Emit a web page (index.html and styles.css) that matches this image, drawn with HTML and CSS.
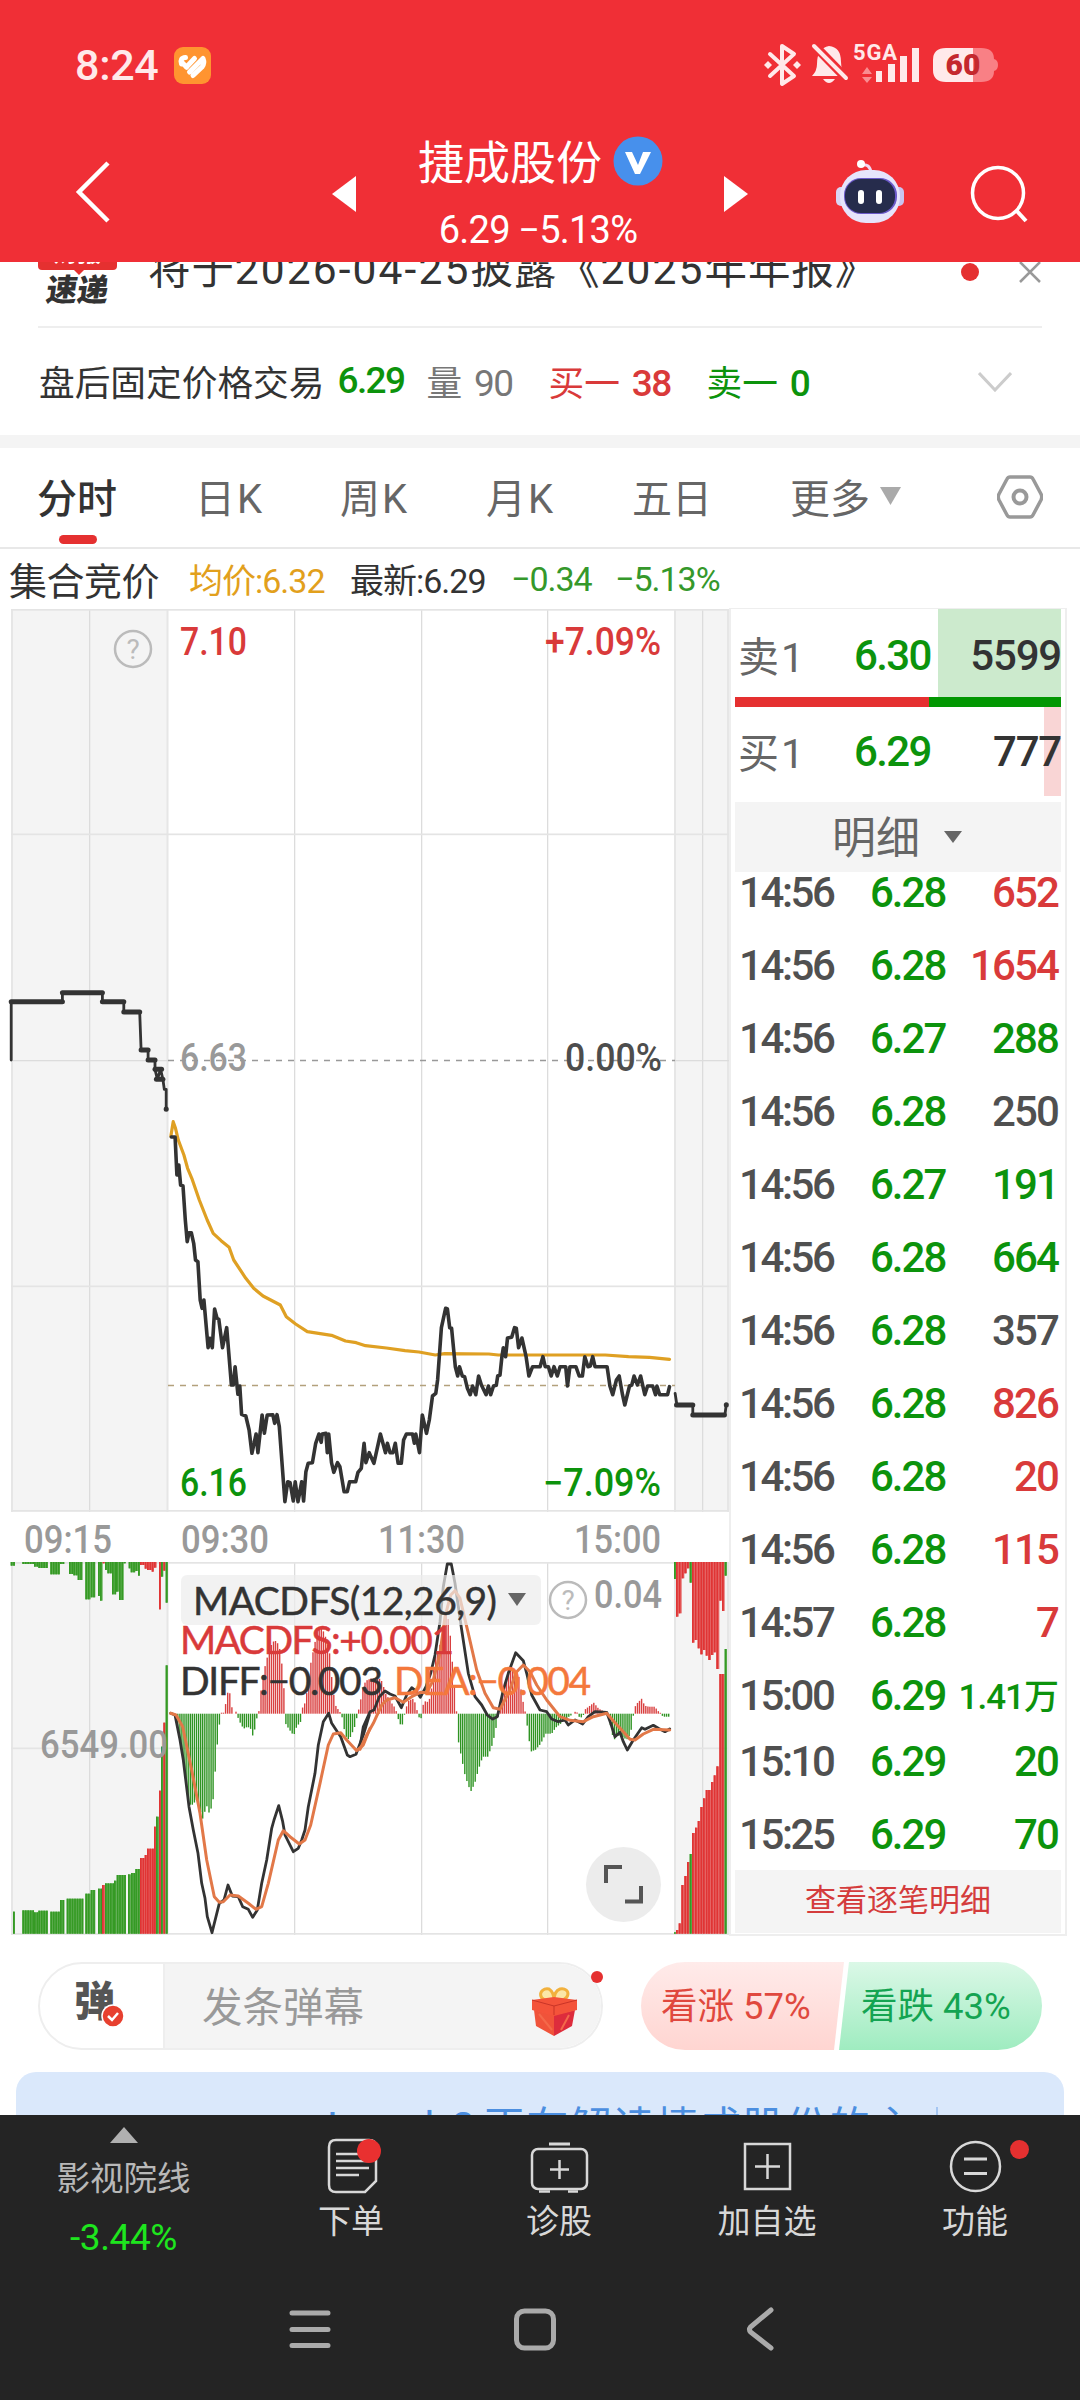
FILE: index.html
```html
<!DOCTYPE html>
<html lang="zh-CN">
<head>
    <meta charset="UTF-8">
    <meta name="viewport" content="width=device-width, initial-scale=1.0">
    <title>捷成股份</title>
    <link rel="stylesheet" href="styles.css">
</head>
<body>
    <div class="header">
        <div class="status-bar">
            <span class="clock">8:24</span>
            <svg class="app-icon" width="37" height="37" viewBox="0 0 37 37">
                <rect width="37" height="37" rx="9" fill="#ff9430"/>
                <path d="M7.500 17q-2-6 4-6.500M12.500 20l8-8.500M15.500 25L29 11.500q2 5-1 8.500l-9 8.500" fill="none" stroke="#fff" stroke-width="5" stroke-linecap="round" stroke-linejoin="round"/>
                <path d="M7.500 15l5 5" stroke="#fff" stroke-width="5" stroke-linecap="round"/>
            </svg>
            <svg class="status-icons" width="240" height="50" viewBox="760 40 240 50">
                <path d="M770 54 L794 76 L782 84 V46 L794 54 L770 76" fill="none" stroke="#ffe9ea" stroke-width="4" stroke-linejoin="round" stroke-linecap="round"/>
                <path d="M764 65l4-4 4 4-4 4zM793 65l4-4 4 4-4 4z" fill="#ffe9ea"/>
                <path d="M812 76 q5-5 5-12 q0-16 12-18 q12 1 12 16 q0 8 5 14z" fill="#ffe9ea"/>
                <path d="M823 79h12q-6 8-12 0z" fill="#ffe9ea"/>
                <path d="M812 43l35 36" stroke="#f02f36" stroke-width="9"/>
                <path d="M814 46l32 32" stroke="#ffe9ea" stroke-width="4" stroke-linecap="round"/>
                <text class="net" x="853" y="60" textLength="44">5GA</text>
                <path d="M862 74l5-7 5 7zM862 77h10l-5 6z" fill="#f98d91"/>
                <path d="M876 71h6v11h-6zM888 64h7v18h-7zM900 56h7v26h-7zM912 48h7v34h-7z" fill="#ffe9ea"/>
                <path d="M973 48h8q13 0 13 11q4 1 4 6t-4 6q0 11-13 11h-8z" fill="#f98085"/>
                <path d="M973 48h-27q-13 0-13 12v10q0 12 13 12h27z" fill="#ffe9ea"/>
                <text class="battery" x="963" y="75" text-anchor="middle">60</text>
            </svg>
        </div>
        <div class="title-bar">
            <svg class="back" width="36" height="64" viewBox="0 0 36 64"><path d="M33 3 L4 32 L33 61" fill="none" stroke="#fff" stroke-width="4.5"/></svg>
            <svg class="prev" width="24" height="36" viewBox="0 0 24 36"><path d="M24 0v36L0 18z" fill="#fff"/></svg>
            <div class="stock">
                <div class="stock-name"><span>捷成股份</span>
                    <svg width="50" height="50" viewBox="0 0 50 50"><circle cx="25" cy="25" r="24.5" fill="#4790ec"/><path d="M12 16h7l6 13 5-13h8L27 38h-5z" fill="#fff"/></svg>
                </div>
                <div class="stock-price">6.29 −5.13%</div>
            </div>
            <svg class="next" width="24" height="36" viewBox="0 0 24 36"><path d="M0 0v36l24-18z" fill="#fff"/></svg>
            <svg class="robot" width="70" height="66" viewBox="835 159 70 66">
                <path d="M861 165q9-2 10 8" fill="none" stroke="#f3d9f2" stroke-width="3"/>
                <circle cx="861" cy="164" r="4" fill="#fff"/>
                <rect x="836" y="187" width="12" height="19" rx="5" fill="#d9d6f5"/>
                <rect x="892" y="187" width="12" height="19" rx="5" fill="#c9c4f0"/>
                <rect x="840" y="170" width="60" height="53" rx="26" fill="#e6e4fb"/>
                <rect x="844" y="178" width="53" height="36" rx="17" fill="#6b59c9"/>
                <rect x="845" y="179" width="50" height="34" rx="16" fill="#262c4c"/>
                <rect x="858" y="190" width="6" height="14" rx="3" fill="#fff"/>
                <rect x="876" y="190" width="6" height="14" rx="3" fill="#fff"/>
            </svg>
            <svg class="search" width="60" height="60" viewBox="969 164 60 60"><circle cx="998" cy="193" r="25.5" fill="none" stroke="#fff" stroke-width="3.5"/><path d="M1016 210l10 11" stroke="#fff" stroke-width="4"/></svg>
        </div>
    </div>

    <div class="content">
        <div class="news">
            <div class="news-badge"><span class="badge-top">财报</span><span class="badge-bottom">速递</span></div>
            <div class="news-text">将于<i>2026-04-25</i>披露《<i>2025</i>年年报》</div>
            <span class="dot news-dot"></span>
            <svg class="news-close" width="24" height="24" viewBox="0 0 24 24"><path d="M2 2l20 20M22 2L2 22" stroke="#999" stroke-width="2.5"/></svg>
        </div>
        <div class="after-hours">
            <span>盘后固定价格交易</span>
            <b class="down num ah-price">6.29</b>
            <span class="grey ah-vol">量 <em>90</em></span>
            <span class="up ah-buy">买一 <b class="num">38</b></span>
            <span class="down ah-sell">卖一 <b class="num">0</b></span>
            <svg class="ah-more" width="34" height="20" viewBox="0 0 34 20"><path d="M1 1l16 17L33 1" fill="none" stroke="#ccc" stroke-width="3"/></svg>
        </div>
        <div class="gap"></div>
        <div class="tabs">
            <div class="tab active">分时</div>
            <div class="tab">日K</div>
            <div class="tab">周K</div>
            <div class="tab">月K</div>
            <div class="tab">五日</div>
            <div class="tab more">更多<svg width="21" height="18" viewBox="0 0 21 18"><path d="M0 0h21L10.500 18z" fill="#aaa"/></svg></div>
            <svg class="setting" width="46" height="44" viewBox="0 0 46 44"><path d="M13 2h20q2 0 3 2l8 15q1.500 3 0 6l-8 15q-1 2-3 2H13q-2 0-3-2L2 25q-1.500-3 0-6L10 4q1-2 3-2z" fill="none" stroke="#999" stroke-width="3.500"/><circle cx="23" cy="22" r="6.500" fill="none" stroke="#999" stroke-width="4"/></svg>
        </div>
        <div class="summary">
            <span class="sum-title">集合竞价</span>
            <span class="sum-avg">均价:6.32</span>
            <span class="sum-last">最新:6.29</span>
            <span class="sum-diff">−0.34</span>
            <span class="sum-pct">−5.13%</span>
        </div>

        <div class="main">
            <svg class="chart" id="chart" width="729" height="1328" viewBox="0 608 729 1328">
                <g id="grid"></g>
                <g id="price"></g>
                <g id="macd"></g>
                <g class="help"><circle cx="133" cy="649" r="18"/><text x="133" y="659">?</text></g>
                <g class="axis">
                    <text class="t-up" x="180" y="654.500" textLength="67" lengthAdjust="spacingAndGlyphs">7.10</text>
                    <text class="t-up" x="545" y="654.500" textLength="116" lengthAdjust="spacingAndGlyphs">+7.09%</text>
                    <text class="t-grey" x="180" y="1070.500" textLength="67" lengthAdjust="spacingAndGlyphs">6.63</text>
                    <text class="t-dark" x="565" y="1070.500" textLength="97" lengthAdjust="spacingAndGlyphs">0.00%</text>
                    <text class="t-down" x="180" y="1495.500" textLength="67" lengthAdjust="spacingAndGlyphs">6.16</text>
                    <text class="t-down" x="543" y="1495.500" textLength="118" lengthAdjust="spacingAndGlyphs">−7.09%</text>
                    <text class="t-grey" x="24" y="1552.500" textLength="88" lengthAdjust="spacingAndGlyphs">09:15</text>
                    <text class="t-grey" x="181" y="1552.500" textLength="88" lengthAdjust="spacingAndGlyphs">09:30</text>
                    <text class="t-grey" x="378" y="1552.500" textLength="87" lengthAdjust="spacingAndGlyphs">11:30</text>
                    <text class="t-grey" x="574" y="1552.500" textLength="87" lengthAdjust="spacingAndGlyphs">15:00</text>
                    <text class="t-grey" x="40" y="1757.500" textLength="128" lengthAdjust="spacingAndGlyphs">6549.00</text>
                    <text class="t-grey" x="594" y="1607.500" textLength="68" lengthAdjust="spacingAndGlyphs">0.04</text>
                </g>
                <rect x="181" y="1575" width="360" height="50" rx="6" fill="#ececec" fill-opacity=".7"/>
                <g class="indicator">
                    <text class="t-ink" x="193" y="1615" textLength="304">MACDFS(12,26,9)</text>
                    <text class="t-up" x="180" y="1654" textLength="274">MACDFS:+0.001</text>
                    <text class="t-ink" x="180" y="1695" textLength="203">DIFF:−0.003</text>
                    <text class="t-dea" x="394" y="1695" textLength="197">DEA:−0.004</text>
                </g>
                <path d="M508 1593h18l-9 13z" fill="#666"/>
                <g class="help"><circle cx="568" cy="1600" r="18"/><text x="568" y="1610">?</text></g>
                <circle cx="623.500" cy="1884.500" r="37.500" fill="#ececec"/>
                <path d="M622 1867h-16v16M641 1886v15.500h-16" fill="none" stroke="#555" stroke-width="4"/>
            </svg>

            <div class="panel">
                <div class="quote">
                    <span class="q-depth sell"></span>
                    <span class="q-name">卖1</span><b class="num q-price">6.30</b><b class="num q-vol">5599</b>
                </div>
                <div class="ratio"><span class="ratio-buy"></span><span class="ratio-sell"></span></div>
                <div class="quote bid">
                    <span class="q-depth buy"></span>
                    <span class="q-name">买1</span><b class="num q-price">6.29</b><b class="num q-vol">777</b>
                </div>
                <div class="detail-head">明细<svg width="18" height="12" viewBox="0 0 18 12"><path d="M0 0h18L9 12z" fill="#666"/></svg></div>
                <div class="ticks">
                    <div class="tick"><span>14:56</span><b>6.28</b><b class="vol up">652</b></div>
                    <div class="tick"><span>14:56</span><b>6.28</b><b class="vol up">1654</b></div>
                    <div class="tick"><span>14:56</span><b>6.27</b><b class="vol down">288</b></div>
                    <div class="tick"><span>14:56</span><b>6.28</b><b class="vol flat">250</b></div>
                    <div class="tick"><span>14:56</span><b>6.27</b><b class="vol down">191</b></div>
                    <div class="tick"><span>14:56</span><b>6.28</b><b class="vol down">664</b></div>
                    <div class="tick"><span>14:56</span><b>6.28</b><b class="vol flat">357</b></div>
                    <div class="tick"><span>14:56</span><b>6.28</b><b class="vol up">826</b></div>
                    <div class="tick"><span>14:56</span><b>6.28</b><b class="vol up">20</b></div>
                    <div class="tick"><span>14:56</span><b>6.28</b><b class="vol up">115</b></div>
                    <div class="tick"><span>14:57</span><b>6.28</b><b class="vol up">7</b></div>
                    <div class="tick"><span>15:00</span><b>6.29</b><b class="vol down small">1.41万</b></div>
                    <div class="tick after"><span>15:10</span><b>6.29</b><b class="vol down">20</b></div>
                    <div class="tick"><span>15:25</span><b>6.29</b><b class="vol down">70</b></div>
                </div>
                <div class="detail-more">查看逐笔明细</div>
            </div>
        </div>

        <div class="actions">
            <div class="danmu">
                <div class="danmu-switch">弹
                    <svg width="24" height="24" viewBox="0 0 24 24"><circle cx="12" cy="12" r="11" fill="#e7402f" stroke="#fff" stroke-width="1.500"/><path d="M7 12l4 4 6-7" fill="none" stroke="#fff" stroke-width="2.500"/></svg>
                </div>
                <div class="danmu-input">发条弹幕
                    <svg width="46" height="50" viewBox="532 1989 46 50">
                        <path d="M555 2004c-18 2-16-14-5-12q5 3 5 12c0-9 3-11 6-12c11-2 12 13-6 12z" fill="#fbe7a8" stroke="#f2b13d" stroke-width="3"/>
                        <path d="M535 2013l20 5v21l-18-10z" fill="#f0533a"/>
                        <path d="M576 2013l-21 5v21l18-10z" fill="#dd2c3c"/>
                        <path d="M533 2003l22-3 23 3v10l-23 6-22-6z" fill="#f4533a"/>
                        <path d="M533 2003l22 6 23-6M555 2009v9" fill="none" stroke="#c93427" stroke-width="1"/>
                        <path d="M540 2017l13 16M562 2033l8-15" stroke="#f4694a" stroke-width="2"/>
                    </svg>
                </div>
                <span class="dot danmu-dot"></span>
            </div>
            <div class="vote">
                <div class="vote-up">看涨 57%</div>
                <div class="vote-down">看跌 43%</div>
            </div>
        </div>
        <div class="promo"><span class="promo-text"><i>Level-2</i>正在解读捷成股份的主</span><span class="promo-line"></span><span class="promo-more">&gt;&gt;</span></div>
    </div>

    <div class="footer">
        <div class="nav">
            <div class="nav-index">
                <svg width="28" height="16" viewBox="0 0 28 16"><path d="M0 16L14 0l14 16z" fill="#b0b0b0"/></svg>
                <span class="index-name">影视院线</span>
                <span class="index-pct">-3.44%</span>
            </div>
            <div class="nav-item">
                <svg width="60" height="60" viewBox="321 2136 60 60">
                    <path d="M336 2140h33q7 0 7 7v34l-11 11h-29q-7 0-7-7v-38q0-7 7-7z" fill="none" stroke="#d8d8d8" stroke-width="2.500"/>
                    <path d="M336 2154h26M336 2161h33M336 2168h33M336 2175h23" stroke="#d8d8d8" stroke-width="2.500"/>
                    <circle cx="369" cy="2151" r="12" fill="#e93030"/>
                </svg>
                <span>下单</span>
            </div>
            <div class="nav-item">
                <svg width="60" height="60" viewBox="529 2136 60 60">
                    <path d="M549 2144h21" stroke="#d8d8d8" stroke-width="3"/>
                    <rect x="532" y="2149" width="55" height="40" rx="6" fill="none" stroke="#d8d8d8" stroke-width="2.500"/>
                    <path d="M559.500 2160v19M550 2169.500h19M539 2191.500h11M568 2191.500h10" stroke="#d8d8d8" stroke-width="2.500"/>
                </svg>
                <span>诊股</span>
            </div>
            <div class="nav-item">
                <svg width="60" height="60" viewBox="737 2136 60 60">
                    <rect x="745" y="2144" width="45" height="45" fill="none" stroke="#d8d8d8" stroke-width="2.500"/>
                    <path d="M767.500 2154v25M755 2166.500h25" stroke="#d8d8d8" stroke-width="2.500"/>
                </svg>
                <span>加自选</span>
            </div>
            <div class="nav-item">
                <svg width="60" height="60" viewBox="945 2136 60 60">
                    <circle cx="975.500" cy="2166.500" r="24.500" fill="none" stroke="#d8d8d8" stroke-width="2.500"/>
                    <path d="M964 2159h23M964 2173.500h23" stroke="#d8d8d8" stroke-width="3"/>
                </svg>
                <span>功能</span>
                <i class="dot nav-dot"></i>
            </div>
        </div>
        <div class="system-bar">
            <svg width="42" height="44" viewBox="0 0 42 44"><path d="M3 6h36M3 22.500h36M3 38.500h36" stroke="#aaa" stroke-width="5" stroke-linecap="round"/></svg>
            <svg width="44" height="44" viewBox="0 0 44 44"><rect x="3.500" y="4" width="37" height="37" rx="8" fill="none" stroke="#aaa" stroke-width="5"/></svg>
            <svg width="30" height="44" viewBox="0 0 30 44"><path d="M26 3L5.500 20q-2 2.500 0 5L26 41" fill="none" stroke="#aaa" stroke-width="5" stroke-linecap="round"/></svg>
        </div>
    </div>
    <script src="chart.js"></script>
</body>
</html>
```
FILE: styles.css
```css
* {
    box-sizing: border-box;
}
body {
    margin: 0;
    width: 1080px;
    height: 2400px;
    overflow: hidden;
    background: #fff;
    color: #333;
    font-family: Roboto, "Noto Sans CJK SC", sans-serif;
}
svg {
    display: block;
    flex: none;
}
span, b, div {
    white-space: nowrap;
}
i, em {
    font-style: normal;
}
.up {
    color: #d93a3a;
}
.down {
    color: #0c930c;
}
.grey {
    color: #777;
}
.num {
    font-weight: 500;
}
.dot {
    display: block;
    border-radius: 50%;
    background: #e53030;
}

/* 顶部 */
.header {
    height: 262px;
    background: #f02f36;
    color: #fff;
}
.status-bar {
    display: flex;
    align-items: center;
    height: 130px;
    padding: 0 80px 0 75px;
}
.clock {
    font-size: 43px;
    font-weight: 500;
    color: #ffe9ea;
    width: 99px;
    letter-spacing: -0.3px;
}
.status-icons {
    margin-left: auto;
}
.net {
    font-size: 22px;
    font-weight: 700;
    fill: #ffe9ea;
}
.battery {
    font-size: 30px;
    font-weight: 900;
    fill: #c4282e;
}
.title-bar {
    display: flex;
    align-items: flex-start;
    height: 132px;
}
.back {
    margin: 30px 0 0 75px;
}
.prev {
    margin: 46px 0 0 221px;
}
.stock {
    width: 368px;
    text-align: center;
}
.stock-name {
    display: flex;
    justify-content: center;
    align-items: center;
    height: 62px;
    font-size: 46px;
    gap: 11px;
    padding-left: 1px;
}
.stock-name span {
    margin-top: -4px;
}
.stock-price {
    font-size: 38px;
    line-height: 44px;
    margin: 16px 4px 0 0;
    letter-spacing: -0.8px;
}
.next {
    margin-top: 46px;
}
.robot {
    margin: 29px 0 0 87px;
}
.search {
    margin: 34px 0 0 64px;
}

/* 内容区 */
.content {
    height: 1853px;
    overflow: hidden;
}
.news {
    display: flex;
    height: 66px;
    margin: 0 38px;
    border-bottom: 2px solid #eee;
    overflow: hidden;
}
.news-badge {
    position: relative;
    width: 79px;
    margin-top: -22px;
    font-size: 31px;
    font-weight: 900;
    text-align: center;
}
.badge-top {
    display: block;
    height: 30px;
    line-height: 27px;
    border-radius: 4px;
    background: #e53030;
    color: #fff;
    font-size: 24px;
}
.badge-bottom {
    display: block;
    line-height: 32px;
    margin-top: 5px;
    transform: skewX(-8deg);
}
.news-badge::after {
    content: "";
    position: absolute;
    left: 36px;
    top: 30px;
    border: 5px solid transparent;
    border-top-color: #e53030;
}
.news-text {
    width: 806px;
    margin-left: 31px;
    font-size: 42.5px;
    line-height: 60px;
    margin-top: -22px;
    letter-spacing: 0.9px;
}
.news-text i {
    letter-spacing: 2.1px;
}
.news-dot {
    width: 18px;
    height: 18px;
    margin: 1px 0 0 7px;
}
.news-close {
    margin: -2px 0 0 39px;
}
.after-hours {
    display: flex;
    align-items: center;
    height: 107px;
    padding: 0 0 3px 39px;
    font-size: 35.7px;
}
.after-hours em, .after-hours .num {
    letter-spacing: -1.6px;
    font-size: 37px;
}
.ah-price {
    width: 89px;
    margin-left: 13px;
}
.ah-vol {
    width: 122px;
}
.ah-vol em {
    margin-left: 3px;
}
.ah-buy {
    width: 158px;
}
.ah-buy b, .ah-sell b {
    margin-left: 3px;
}
.ah-sell {
    width: 271px;
}
.ah-more {
    margin-top: 3px;
}
.gap {
    height: 13px;
    background: #f4f4f4;
}
.tabs {
    display: flex;
    align-items: center;
    height: 101px;
    padding: 0 0 3px 37px;
    border-bottom: 2px solid #e8e8e8;
    font-size: 40px;
    color: #666;
}
.tab {
    width: 146px;
    letter-spacing: 2px;
}
.tab:nth-child(2) {
    width: 145px;
}
.tab.active {
    position: relative;
    width: 158px;
    letter-spacing: 0;
    font-weight: 500;
    color: #333;
}
.tab.active::after {
    content: "";
    position: absolute;
    left: 22px;
    bottom: -19px;
    width: 38px;
    height: 9px;
    border-radius: 5px;
    background: #e53030;
}
.tab:nth-child(5) {
    width: 158px;
    letter-spacing: 0;
}
.tab.more {
    display: flex;
    align-items: center;
    gap: 10px;
    width: 207px;
    letter-spacing: 0;
}
.setting {
    margin-top: 2px;
}
.summary {
    display: flex;
    align-items: center;
    height: 59px;
    padding: 0 0 0 9px;
    font-size: 34px;
    letter-spacing: -1px;
}
.sum-title {
    width: 180px;
    font-size: 38px;
    letter-spacing: -0.5px;
}
.sum-avg {
    width: 161px;
    color: #e2a01c;
}
.sum-last {
    width: 161px;
}
.sum-diff {
    width: 104px;
    color: #35982b;
}
.sum-pct {
    color: #35982b;
}

/* 分时图 */
.main {
    display: flex;
    height: 1328px;
}
.axis text {
    font-size: 38px;
}
.axis text, .indicator text {
    font-weight: 500;
}
.indicator text {
    font-size: 39px;
    font-weight: 400;
    font-family: Lato, Roboto, sans-serif;
    stroke-width: 0.5px;
}
.t-up {
    fill: #d93a3a;
}
.t-down {
    fill: #0c930c;
}
.t-grey {
    fill: #999;
}
.t-dark {
    fill: #4d4d4d;
}
.t-ink {
    fill: #333;
}
.t-dea {
    fill: #f4783c;
}
.indicator .t-ink {
    stroke: #333;
}
.indicator .t-up {
    stroke: #d93a3a;
}
.indicator .t-dea {
    stroke: #f4783c;
}
.help circle {
    fill: none;
    stroke: #bbb;
    stroke-width: 2.5;
}
.help text {
    font-size: 28px;
    fill: #bbb;
    text-anchor: middle;
}

/* 盘口和明细 */
.panel {
    width: 338px;
    height: 1328px;
    border: 2px solid #eee;
    border-top-width: 1px;
    padding: 0 4px;
}
.quote {
    position: relative;
    display: flex;
    align-items: center;
    height: 88px;
    font-size: 42px;
    padding: 5px 0 0 3px;
}
.quote.bid {
    height: 89px;
    padding-top: 0;
}
.q-depth {
    position: absolute;
    right: 0;
    top: 0;
    height: 100%;
}
.q-depth.sell {
    width: 123px;
    background: #cceacd;
}
.q-depth.buy {
    width: 17px;
    background: #f9d5d5;
}
.q-name {
    width: 116px;
    margin-top: -4px;
    font-size: 41px;
    color: #666;
    letter-spacing: 2px;
}
.q-price {
    position: relative;
    color: #0c930c;
    letter-spacing: -1.6px;
}
.q-vol {
    position: relative;
    margin-left: auto;
    letter-spacing: -1.2px;
}
.ratio {
    display: flex;
    height: 10px;
}
.ratio-buy {
    width: 194px;
    background: #e53030;
}
.ratio-sell {
    flex: 1;
    background: #029702;
}
.detail-head {
    display: flex;
    justify-content: center;
    align-items: center;
    gap: 24px;
    height: 70px;
    margin-top: 6px;
    padding: 0 2px 4px 0;
    background: #f4f4f4;
    color: #666;
    font-size: 44px;
}
.detail-head svg {
    margin-top: 4px;
}
.ticks {
    height: 998px;
    padding: 0 3px 0 4px;
    overflow: hidden;
}
.tick {
    display: flex;
    align-items: center;
    height: 73px;
    font-size: 42px;
}
.tick:first-child {
    margin-top: -16px;
}
.tick.after {
    margin-top: -7px;
}
.tick span {
    width: 131px;
    color: #505050;
    font-weight: 500;
    letter-spacing: -2.4px;
}
.tick b {
    font-weight: 500;
    color: #0c930c;
    letter-spacing: -2px;
}
.tick .vol {
    margin-left: auto;
    letter-spacing: -1.9px;
}
.tick .up {
    color: #d93a3a;
}
.tick .flat {
    color: #505050;
}
.tick .small {
    font-size: 35px;
    letter-spacing: -1px;
    margin-top: -4px;
}
.detail-more {
    height: 63px;
    line-height: 61px;
    background: #f4f4f4;
    color: #d43c3c;
    font-size: 31px;
    text-align: center;
}

/* 弹幕 / 投票 */
.actions {
    display: flex;
    height: 88px;
    margin: 26px 38px 0;
}
.danmu {
    position: relative;
    display: flex;
    width: 565px;
    border: 2px solid #eee;
    border-radius: 44px;
}
.danmu-switch {
    position: relative;
    width: 125px;
    padding-left: 34px;
    border-right: 2px solid #eee;
    font-size: 41px;
    line-height: 76px;
    font-weight: 900;
    color: #555;
}
.danmu-switch svg {
    position: absolute;
    left: 61px;
    top: 40px;
}
.danmu-input {
    display: flex;
    align-items: center;
    justify-content: space-between;
    flex: 1;
    padding: 0 24px 4px 37px;
    background: #f4f4f4;
    border-radius: 0 42px 42px 0;
    font-size: 40.5px;
    color: #999;
}
.danmu-input svg {
    margin-top: 14px;
}
.danmu-dot {
    position: absolute;
    right: -2px;
    top: 7px;
    width: 12px;
    height: 12px;
}
.vote {
    display: flex;
    width: 401px;
    margin-left: 38px;
    border-radius: 44px;
    overflow: hidden;
    font-size: 36.5px;
    line-height: 89px;
}
.vote-up {
    width: 203px;
    padding-left: 20px;
    background: linear-gradient(#ffebea, #ffd5d1);
    clip-path: polygon(0 0, 100% 0, 193px 100%, 0 100%);
    color: #e0483e;
}
.vote-down {
    width: 203px;
    margin-left: -5px;
    padding-left: 22px;
    background: linear-gradient(#dbf8e7, #9fecc0);
    clip-path: polygon(10px 0, 100% 0, 100% 100%, 0 100%);
    color: #14a452;
}
.promo {
    display: flex;
    margin: 22px 16px 0;
    height: 120px;
    padding: 26px 0 0 311px;
    border-radius: 20px;
    background: #dae8fb;
    color: #4b8ee0;
    font-size: 42px;
    line-height: 60px;
}
.promo-text {
    width: 609px;
    letter-spacing: 1.2px;
}
.promo-text i {
    display: inline-block;
    width: 156px;
    letter-spacing: 2.6px;
}
.promo-line {
    width: 2px;
    height: 40px;
    margin-top: 9px;
    background: #a5c6f2;
}
.promo-more {
    margin-left: 48px;
}

/* 底部 */
.footer {
    height: 285px;
    background: #242424;
    color: #d8d8d8;
}
.nav {
    display: flex;
    height: 170px;
}
.nav-index {
    display: flex;
    flex-direction: column;
    align-items: center;
    width: 247px;
    padding-top: 12px;
}
.index-name {
    margin-top: 12px;
    font-size: 33.5px;
    line-height: 48px;
    color: #b8b8b8;
}
.index-pct {
    margin-top: 13px;
    font-size: 37px;
    line-height: 44px;
    color: #1ee61e;
    letter-spacing: -0.4px;
}
.nav-item {
    position: relative;
    display: flex;
    flex-direction: column;
    align-items: center;
    width: 208px;
    padding-top: 21px;
    font-size: 33px;
    line-height: 52px;
}
.nav-dot {
    position: absolute;
    left: 139px;
    top: 25px;
    width: 19px;
    height: 19px;
}
.system-bar {
    display: flex;
    padding: 22px 0 0 289px;
}
.system-bar svg:nth-child(2) {
    margin: 0 188px 0 182px;
}
```
FILE: chart.js
```javascript
var NS = 'http://www.w3.org/2000/svg';

function add(parent, name, attrs) {
    var el = document.createElementNS(NS, name);
    for (var k in attrs) el.setAttribute(k, attrs[k]);
    document.getElementById(parent).appendChild(el);
}
// pts: "x,y x,y", scaled by sx/sy and shifted to ox/oy
function line(parent, pts, t, color, width) {
    var out = pts.trim().split(/\s+/).map(function (p) {
        var a = p.split(',');
        return (t[0] + a[0] * t[2]).toFixed(1) + ',' + (t[1] + a[1] * t[3]).toFixed(1);
    });
    add(parent, 'polyline', { points: out.join(' '), fill: 'none', stroke: color, 'stroke-width': width, 'stroke-linejoin': 'round', 'stroke-linecap': 'round' });
}
function rect(parent, x, y, w, h, color, opacity) {
    add(parent, 'rect', { x: x, y: y, width: w, height: h, fill: color, 'fill-opacity': opacity || 1 });
}

// 网格
[[609, 903], [1562, 373]].forEach(function (b) {
    rect('grid', 12, b[0], 156, b[1], '#f4f4f4');
    rect('grid', 675, b[0], 54, b[1], '#f4f4f4');
    [89, 294, 421, 547, 702].forEach(function (x) { rect('grid', x, b[0], 1.3, b[1], '#dcdcdc'); });
    [11, 166.5, 674, 727].forEach(function (x) { rect('grid', x, b[0], 2, b[1], '#e6e6e6'); });
});
[609, 833.5, 1285.5, 1510, 1562, 1747.5, 1933].forEach(function (y) { rect('grid', 11, y, 718, 1.7, '#e4e4e4'); });
rect('grid', 11, 1060, 157, 1.3, '#dcdcdc');
rect('grid', 675, 1060, 54, 1.3, '#dcdcdc');
add('grid', 'path', { d: 'M168 1060.500H675', stroke: '#999', 'stroke-width': 1.6, 'stroke-dasharray': '6 6' });
add('grid', 'path', { d: 'M168 1385.500H675', stroke: '#b3a17c', 'stroke-width': 1.6, 'stroke-dasharray': '6 6' });

// 均价线和价格线
var P = [0, 1060, 0.46557, 0.33333];
line('price', '367,228 372,185 377,205 383,240 395,285 403,325 412,355 428,420 445,480 458,520 475,542 492,562 502,600 528,655 545,685 565,708 602,735 615,770 635,792 660,815 712,826 742,843 765,848 785,857 830,864 870,872 900,876 935,885 955,881 1050,882 1070,885 1300,885 1350,890 1395,892 1438,898', P, '#dfa023', 3.2);
line('price', '368,231 376,231 380,345 384,315 388,375 393,378 398,480 402,545 406,518 411,518 416,550 420,600 425,605 430,720 434,745 438,720 447,863 451,835 456,863 461,747 466,775 470,778 478,863 487,803 497,975 501,975 505,920 511,1003 515,978 519,1063 528,1068 535,1110 541,1180 550,1122 554,1178 563,1065 568,1120 574,1065 586,1064 590,1090 595,1064 600,1100 612,1325 618,1265 623,1268 630,1323 634,1265 640,1325 648,1265 652,1323 657,1235 662,1210 671,1208 678,1150 685,1122 690,1147 692,1122 700,1120 703,1178 706,1122 712,1208 717,1237 725,1208 730,1220 739,1295 746,1295 751,1265 764,1265 769,1237 776,1225 782,1150 786,1208 793,1178 803,1210 817,1122 828,1178 832,1150 838,1178 844,1178 849,1150 855,1210 862,1210 867,1140 873,1122 886,1122 890,1150 893,1122 901,1178 907,1065 916,1120 922,1080 929,1008 936,1000 940,960 948,803 957,745 961,747 966,803 970,805 978,920 983,948 987,920 993,948 998,950 1004,985 1010,1004 1015,978 1022,1004 1028,948 1034,975 1044,1004 1049,978 1054,1004 1060,978 1066,976 1069,948 1074,945 1078,890 1081,863 1086,890 1090,834 1099,832 1105,803 1109,805 1114,863 1121,834 1130,890 1136,948 1144,920 1160,920 1166,890 1171,920 1178,920 1184,948 1190,920 1197,948 1203,920 1215,920 1219,978 1224,920 1237,920 1244,948 1251,948 1256,890 1263,920 1268,918 1273,890 1278,920 1304,920 1310,978 1316,1004 1324,960 1330,948 1337,1004 1342,1035 1352,978 1357,975 1362,948 1369,975 1376,948 1385,1004 1391,978 1402,978 1408,1004 1411,978 1417,1004 1434,1004 1438,980', P, '#333', 3.6);

// 集合竞价
line('price', '24,0 24,-175 134,-175 134,-202 220,-202 220,-175 266,-175 266,-144 300,-144 303,-30 318,-30 318,0 333,0 333,28 338,58 345,28 350,58 353,88 357,88 357,148', P, '#333', 2.8);
line('price', '1450,1000 1454,1035 1488,1035 1488,1065 1557,1065 1560,1033', P, '#333', 2.8);
['24,-175 134,-175', '134,-202 220,-202', '220,-175 266,-175', '266,-144 300,-144', '303,-30 318,-30', '318,0 333,0', '333,28 347,28', '336,58 350,58', '357,147 357,148', '1453,1035 1488,1035', '1488,1065 1556,1065', '1560,1034 1560,1035'].forEach(function (s) {
    line('price', s, P, '#333', 5);
});

// MACD柱
var ZERO = 1713.7;
var hist = [[175, 0], [177, -14], [182, -43], [188, -91], [192, -91], [196, -86], [202, -105], [206, -92], [209, -101], [213, -83], [215, -50], [217, -26], [219, -8],
    [220, 1], [223, 1], [225, 10], [227, 21], [229, 21], [231, 7], [233, 0], [235, 3], [236, 0], [238, -6], [241, -12], [243, -15], [247, -13], [251, -16], [252, -22], [254, -16], [256, -5], [258, 0],
    [259, 13], [262, 37], [265, 50], [268, 62], [272, 72], [276, 73], [280, 62], [282, 40], [284, 15], [284.2, 0], [285, -10], [288, -15], [293, -22], [296, -13], [300, -8], [301, 0],
    [302, 7], [305, 12], [309, 45], [313, 65], [317, 85], [320, 87], [324, 80], [329, 60], [332, 25], [335, 8], [339, 2], [341, 0], [342, -9], [345, -22], [347, -26], [350, -23], [354, -13], [357, 0],
    [359, 8], [362, 25], [365, 33], [370, 35], [380, 35], [382, 30], [385, 20], [390, 12], [395, 5], [396, 0], [397, -4], [401, -14], [403, -5], [404, 0], [405, 5], [408, 13], [412, 15], [415, 10], [417, 0], [420, -8], [421, 0],
    [422, 8], [425, 13], [428, 11], [431, 26], [434, 55], [438, 65], [441, 75], [444, 90], [446, 104], [449, 85], [451, 60], [453, 35], [455, 12], [456, 0],
    [457, -24], [460, -40], [464, -60], [467, -70], [470, -78], [474, -70], [478, -55], [482, -43], [487, -43], [492, -30], [495, -16], [497, -5], [498, 0],
    [499, 10], [503, 25], [508, 43], [513, 45], [518, 38], [521, 20], [523, 8], [525, 0], [526, -8], [530, -38], [535, -36], [540, -30], [545, -20], [551, -20], [555, -14], [560, -10], [565, -5], [570, -2], [572, 0],
    [574, 2], [577, 1], [578, -3], [582, -4], [584, 4], [588, 7], [593, 11], [598, 5], [604, 2], [607, 0], [609, -8], [613, -27], [616, -22], [620, -22], [626, -26], [630, -20], [632, -5],
    [633, 0], [635, 9], [641, 15], [644, 8], [648, 7], [654, 7], [658, 2], [661, 0], [662, -3], [668, -3], [669, 0], [670, 3]];
for (var x = 175, i = 0; x <= 670; x += 2.08) {
    while (i < hist.length - 2 && hist[i + 1][0] < x) i++;
    var a = hist[i], b = hist[i + 1];
    var h = a[1] + (b[1] - a[1]) * (x - a[0]) / (b[0] - a[0]);
    if (Math.abs(h) < 0.4) continue;
    rect('macd', x.toFixed(1), h > 0 ? ZERO - h : ZERO, 1.4, Math.abs(h), h > 0 ? '#d94040' : '#2f9423');
}

// 竞价量柱: x1, x2, y, 颜色
function bars(ox, list, top) {
    list.trim().split(/\s+/).forEach(function (s) {
        var v = s.split(','), x1 = ox + v[0] / 3, x2 = ox + v[1] / 3, y = 1540 + v[2] / 3;
        var y1 = top ? 1562 : y, y2 = top ? y : 1933.7;
        var c = v[3] === 'r' ? '#e03434' : '#359a24';
        rect('macd', x1, y1, x2 - x1, y2 - y1, c, 0.75);
        for (var x = x1; x < x2 - 1; x += 2.5) rect('macd', x, y1, 1.7, y2 - y1, c);
    });
}
bars(0, '39,45,1115,g 67,102,1111,g 102,115,1117,g 115,144,1112,g 151,180,1115,g 180,193,1080,g 200,250,1076,g 256,272,1061,g 272,286,1050,g 294,306,1046,g 306,315,1035,r 315,342,1030,g 342,350,1022,g 350,378,1005,g 384,393,1003,g 393,406,999,g 406,420,987,g 420,434,954,r 434,441,945,r 441,462,926,r 462,468,860,r 468,477,830,g 477,483,752,r 483,490,620,g 490,497,548,r 497,504,376,g', false);
bars(0, '32,45,77,g 67,102,72,g 102,115,80,g 115,144,84,g 151,180,103,g 180,193,72,g 207,220,102,g 220,233,106,g 233,248,120,g 256,272,178,g 272,286,172,g 294,300,168,g 300,308,182,g 308,315,70,r 315,322,90,g 322,336,100,g 336,348,163,g 348,357,155,g 357,371,180,g 371,378,70,g 386,392,85,g 392,406,97,g 406,414,93,g 414,420,107,g 420,434,75,r 434,441,86,r 441,455,90,r 455,462,95,r 462,470,83,r 477,483,208,r 483,490,110,g 490,497,92,r 497,504,188,g', true);
bars(360, '942,948,117,g 948,956,230,r 956,965,220,r 965,973,115,r 973,981,100,r 981,989,85,r 989,996,128,g 996,1004,308,r 1004,1013,300,r 1013,1021,325,r 1021,1029,343,r 1029,1037,330,r 1037,1045,347,r 1045,1053,360,r 1053,1061,345,r 1061,1069,337,r 1069,1078,387,r 1078,1086,182,r 1086,1094,213,r 1094,1101,107,g', true);
bars(360, '942,948,1177,g 948,956,1170,r 956,964,1150,r 964,973,1035,r 973,981,1008,r 981,989,966,r 989,996,942,g 996,1005,879,r 1005,1013,863,r 1013,1021,843,r 1021,1029,801,r 1029,1037,775,r 1037,1053,750,r 1053,1061,726,r 1061,1069,706,r 1069,1078,679,r 1078,1094,402,r 1094,1101,327,g', false);

// DIFF / DEA
var L = [0, 1540, 1 / 3, 1 / 3], R = [360, 1540, 1 / 3, 1 / 3];
line('macd', '512,520 525,525 540,600 550,660 567,800 580,870 594,940 605,1030 615,1075 622,1130 636,1178 658,1090 672,1080 684,1035 697,1068 715,1070 728,1100 745,1108 758,1132 772,1110 785,1030 800,960 815,865 822,840 836,797 848,845 855,885 880,935 895,925 905,900 915,870 925,800 945,700 955,615 970,545 986,520 995,550 1012,575 1022,590 1042,645 1050,650 1068,643 1090,585 1108,525', L, '#333', 2.8);
line('macd', '0,620 10,560 30,515 42,510 58,470 75,453 90,462 105,468 124,503 140,465 155,443 170,455 181,472 198,440 212,400 225,345 240,245 250,140 262,72 274,72 285,130 305,270 325,400 345,470 365,495 382,525 398,537 412,530 430,450 445,400 467,338 490,362 500,400 515,465 540,510 560,515 575,537 595,545 615,540 625,555 645,540 668,552 685,530 705,515 740,517 752,550 765,590 780,577 790,605 802,630 820,600 845,563 855,568 880,556 895,565 915,575 929,567', R, '#333', 2.8);
line('macd', '512,520 528,525 548,560 575,690 600,820 620,960 643,1070 658,1087 670,1085 690,1065 715,1068 745,1090 768,1108 785,1100 805,1030 835,900 850,872 870,890 898,912 915,900 932,855 960,730 985,615 1000,582 1022,578 1040,600 1070,632 1090,615 1110,565', L, '#e27848', 3);
line('macd', '0,628 20,585 40,550 65,495 80,480 105,473 130,487 155,470 181,457 200,458 220,420 240,340 255,230 272,165 285,152 300,175 325,280 350,390 375,460 400,503 420,508 445,460 470,395 490,375 510,395 530,435 560,480 600,530 630,541 670,545 700,530 740,520 765,548 790,575 810,598 825,600 850,582 880,568 929,570', R, '#e27848', 3);
```
